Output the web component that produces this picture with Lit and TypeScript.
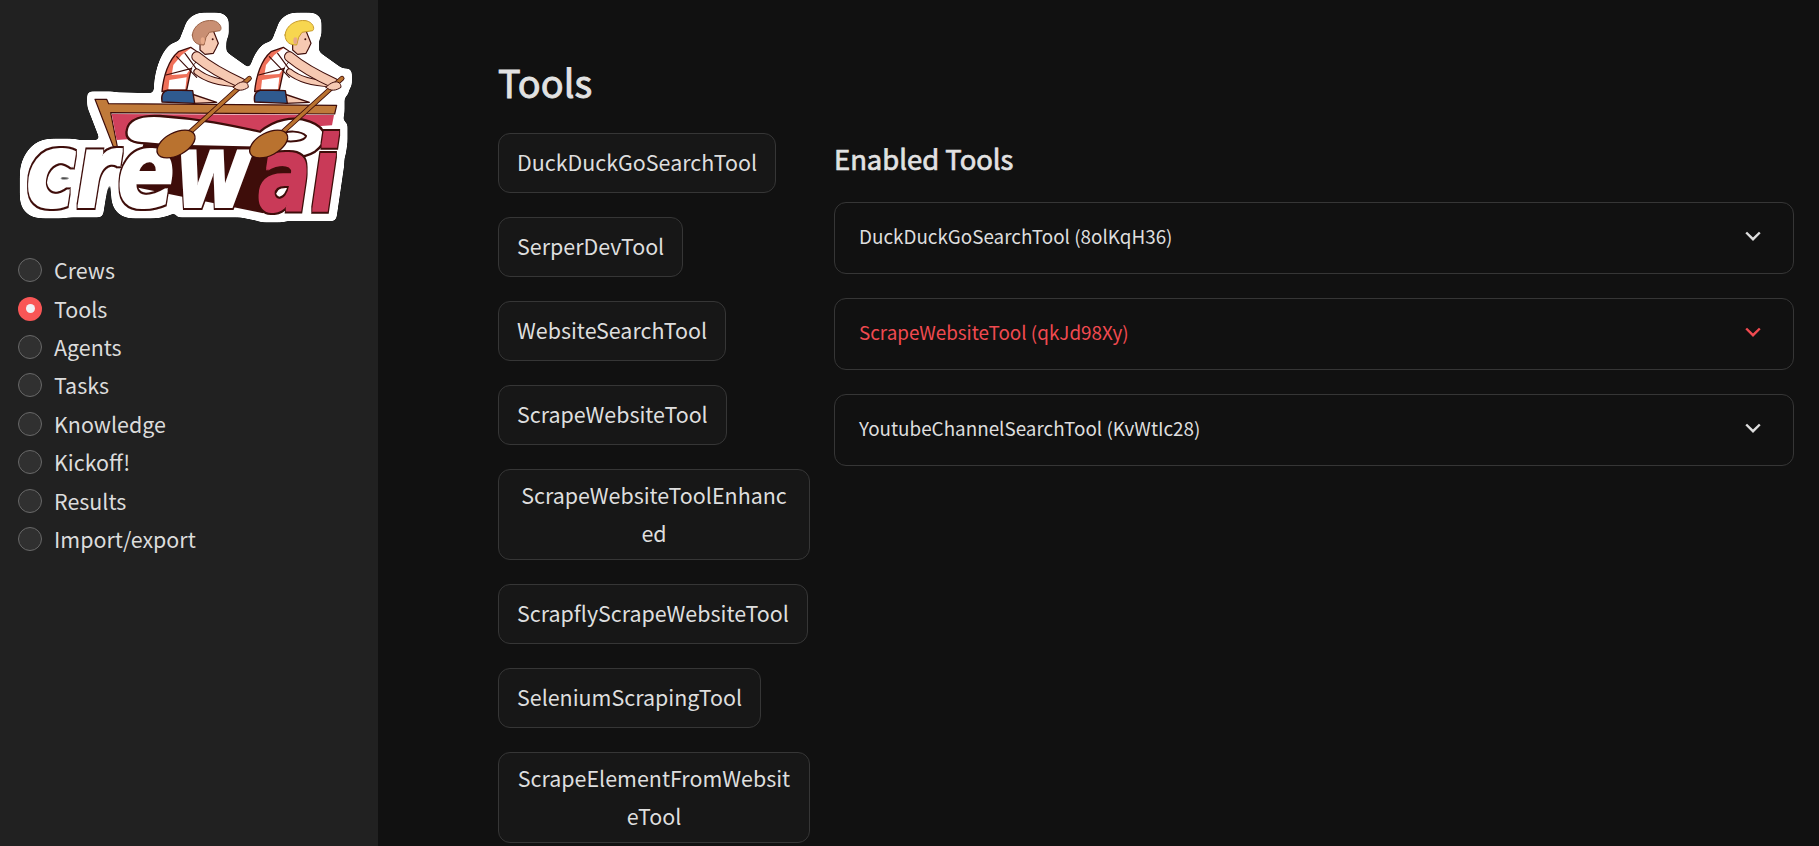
import { LitElement, html, css, svg } from "lit";
import { customElement } from "lit/decorators.js";

const NAV = ["Crews", "Tools", "Agents", "Tasks", "Knowledge", "Kickoff!", "Results", "Import/export"];
const TOOLS = [
  "DuckDuckGoSearchTool", "SerperDevTool", "WebsiteSearchTool", "ScrapeWebsiteTool",
  "ScrapeWebsiteToolEnhanced", "ScrapflyScrapeWebsiteTool", "SeleniumScrapingTool", "ScrapeElementFromWebsiteTool",
];
const ENABLED = [
  { label: "DuckDuckGoSearchTool (8olKqH36)", active: false },
  { label: "ScrapeWebsiteTool (qkJd98Xy)", active: true },
  { label: "YoutubeChannelSearchTool (KvWtIc28)", active: false },
];

const DARK = "#3e0d0a";

function rower(dx: number, hair: string, hairShade: string) {
  return svg`<g transform="translate(${dx} 0)" stroke-linejoin="round" stroke-linecap="round">
    <path d="M575 282 L650 307 L580 310 Z" fill="#f6c9b2" stroke="${DARK}" stroke-width="4"/>
    <path d="M486 306 C482 285 490 272 505 270 L578 272 L584 310 Z" fill="#2f5a8f" stroke="${DARK}" stroke-width="4"/>
    <path d="M486 275 C490 230 505 180 535 155 L572 142 L605 165 L575 200 L560 270 L505 270 Z" fill="#ef7059" stroke="${DARK}" stroke-width="4"/>
    <path d="M505 268 L508 240 L560 232 L556 268 Z" fill="#fff"/>
    <path d="M520 195 L545 165 L572 145 L602 163 L580 195 L560 222 L515 225 Z" fill="#fff"/>
    <path d="M530 170 L590 232 M498 225 L575 205 M555 160 L595 215" stroke="${DARK}" stroke-width="3.5" fill="none"/>
    <path d="M590 215 C620 240 670 250 715 252" stroke="${DARK}" stroke-width="20" fill="none"/>
    <path d="M590 215 C620 240 670 250 715 252" stroke="#f6c9b2" stroke-width="14" fill="none"/>
    <path d="M590 170 C620 195 670 225 725 250" stroke="${DARK}" stroke-width="32" fill="none"/>
    <path d="M590 170 C620 195 670 225 725 250" stroke="#f6c9b2" stroke-width="26" fill="none"/>
    <path d="M600 118 L610 92 L640 92 L655 130 L648 145 L640 160 L615 163 L600 150 Z" fill="#f6c9b2" stroke="${DARK}" stroke-width="3.5"/>
    <path d="M577 105 C580 75 610 58 640 62 C660 66 668 85 660 92 L628 97 L618 112 L612 135 C595 135 578 130 577 105 Z" fill="${hair}" stroke="${hairShade}" stroke-width="3"/>
    <circle cx="638" cy="118" r="3" fill="${DARK}"/>
    <ellipse cx="608" cy="122" rx="6" ry="10" fill="#e7a988"/>
  </g>`;
}

function oar(dx: number) {
  return svg`<g transform="translate(${dx} 0)" stroke-linecap="round">
    <path d="M748 235 L555 410" stroke="${DARK}" stroke-width="15" fill="none"/>
    <path d="M748 235 L555 410" stroke="#b9722f" stroke-width="10" fill="none"/>
    <ellipse cx="528" cy="432" rx="62" ry="34" transform="rotate(-28 528 432)" fill="#b9722f" stroke="${DARK}" stroke-width="4"/>
    <path d="M700 262 C720 240 745 240 745 262 C730 272 715 275 700 262 Z" fill="#f6c9b2" stroke="${DARK}" stroke-width="3"/>
  </g>`;
}

const LOGO = svg`
  <svg class="logo" viewBox="0 0 1140 720" width="380" height="240" role="img" aria-label="crewAI logo">
    <defs>
      <filter id="sticker" x="0" y="0" width="1140" height="720" filterUnits="userSpaceOnUse" color-interpolation-filters="sRGB">
        <feMorphology in="SourceAlpha" operator="dilate" radius="22" result="d"/>
        <feGaussianBlur in="d" stdDeviation="8" result="b"/>
        <feComponentTransfer in="b" result="s"><feFuncA type="linear" slope="10" intercept="-4"/></feComponentTransfer>
        <feFlood flood-color="#ffffff" result="w"/>
        <feComposite in="w" in2="s" operator="in" result="halo"/>
        <feMerge><feMergeNode in="halo"/><feMergeNode in="SourceGraphic"/></feMerge>
      </filter>
      <filter id="fat" x="-20%" y="-20%" width="140%" height="140%" color-interpolation-filters="sRGB">
        <feMorphology in="SourceGraphic" operator="dilate" radius="3" result="fatFill"/>
        <feMorphology in="SourceAlpha" operator="dilate" radius="9" result="o"/>
        <feFlood flood-color="${DARK}" result="dk"/>
        <feComposite in="dk" in2="o" operator="in" result="outline"/>
        <feMerge><feMergeNode in="outline"/><feMergeNode in="fatFill"/></feMerge>
      </filter>
    </defs>
    <g filter="url(#sticker)">
      <g fill="#fff">
        <path d="M285 298 L1010 316 L1000 380 L960 400 L350 440 Z"/>
        <path d="M380 385 C385 350 430 340 480 348 L780 395 C820 360 880 345 930 365 C985 385 990 430 945 460 L500 470 Z"/>
        <path d="M488 300 C485 220 510 170 560 145 C570 110 590 65 625 62 C660 65 665 90 650 135 L640 165 L745 240 L720 300 Z"/>
        <path d="M766 300 C763 220 788 170 838 145 C848 110 868 65 903 62 C938 65 943 90 928 135 L918 165 L1023 240 L998 300 Z"/>
      </g>
      ${rower(0, "#c98f73", "#9b6347")}
      ${rower(278, "#f7d64f", "#c79a2a")}
      <path d="M285 298 L320 298 L326 311 L1010 316 L1004 342 L332 338 L352 440 L340 440 Z" fill="#c07a3a" stroke="${DARK}" stroke-width="3.5" stroke-linejoin="round"/>
      <path d="M335 342 L1002 345 L996 376 L350 420 Z" fill="#d0405c"/>
      <path d="M380 392 C385 355 430 345 480 348 C600 356 690 375 780 395 C820 360 880 345 930 365 C985 385 985 425 945 455 C905 480 850 470 820 465 L440 430 C400 430 375 420 380 392 Z" fill="#fff" stroke="${DARK}" stroke-width="7"/>
      <path d="M430 432 L800 440 L900 470 L790 640 L400 560 Z" fill="${DARK}"/>
      <path d="M840 405 C860 390 905 392 918 408 C915 424 870 428 840 420 Z" fill="#fff" stroke="${DARK}" stroke-width="6"/>
      <g font-family="'DejaVu Sans', sans-serif" font-weight="700" font-style="italic" font-size="310">
        <text transform="translate(78 622) scale(0.815 1)" fill="#fff" filter="url(#fat)">crew</text>
        <text transform="translate(775 632) scale(0.75 1)" fill="#c93a58" filter="url(#fat)">ai</text>
      </g>
      ${oar(0)}
      ${oar(278)}
    </g>
  </svg>`;

@customElement("app-root")
export class AppRoot extends LitElement {
  static styles = css`
    :host {
      display: block;
      height: 100vh;
      overflow: hidden;
      background: #111111;
      color: #e0e0e0;
      font-family: "Noto Sans CJK SC", "Noto Sans", sans-serif;
    }
    .layout { display: flex; height: 100%; }
    .sidebar { width: 378px; flex: none; background: #212121; }
    .logo { display: block; }
    .nav { display: flex; flex-direction: column; padding: 11px 0 0 18px; }
    .nav-item { display: flex; align-items: center; gap: 12px; height: 38.4px; font-size: 21.45px; color: #dcdcdc; }
    .nav-item span:last-child { padding-bottom: 1px; }
    .radio { width: 24px; height: 24px; flex: none; box-sizing: border-box; border-radius: 50%; background: #303030; border: 1.5px solid #686868; }
    .radio.on { background: #f95656; border: none; display: flex; align-items: center; justify-content: center; }
    .radio.on::after { content: ""; width: 9px; height: 9px; border-radius: 50%; background: #f0f2f6; }
    .main { flex: 1; min-width: 0; padding: 53px 25px 0 120px; }
    h1 { margin: 0 0 22px; font-size: 37.8px; line-height: 58px; font-weight: 400; -webkit-text-stroke: 0.9px #e2e2e2; color: #e2e2e2; }
    .cols { display: flex; gap: 24px; align-items: flex-start; }
    .left { width: 312px; flex: none; display: flex; flex-direction: column; align-items: flex-start; gap: 24px; }
    .btn {
      box-sizing: border-box; max-width: 100%; min-height: 60px; padding: 5.5px 18px 7.5px;
      display: flex; align-items: center; justify-content: center; text-align: center;
      font-size: 21.45px; line-height: 38px; color: #dedede;
      background: #171717; border: 1px solid #363636; border-radius: 12px; overflow-wrap: anywhere;
    }
    .right { flex: 1; min-width: 0; display: flex; flex-direction: column; }
    h2 { margin: 0 0 23px; padding-top: 4px; font-size: 27.4px; line-height: 42px; font-weight: 400; -webkit-text-stroke: 0.7px #e2e2e2; color: #e2e2e2; }
    .exp {
      box-sizing: border-box; height: 71.5px; margin-bottom: 24.5px; padding: 0 32px 4px 24px;
      display: flex; align-items: center; justify-content: space-between;
      border: 1px solid #363636; border-radius: 12px; font-size: 18.85px; color: #dedede;
    }
    .exp.active { color: #f04a50; }
    .chev { width: 16px; height: 10px; fill: none; stroke: currentColor; stroke-width: 2.4; }
  `;

  render() {
    return html`<div class="layout">
      <aside class="sidebar">
        ${LOGO}
        <nav class="nav">
          ${NAV.map((n) => html`<div class="nav-item"><span class="radio ${n === "Tools" ? "on" : ""}"></span><span>${n}</span></div>`)}
        </nav>
      </aside>
      <main class="main">
        <h1>Tools</h1>
        <div class="cols">
          <div class="left">${TOOLS.map((t) => html`<div class="btn">${t}</div>`)}</div>
          <div class="right">
            <h2>Enabled Tools</h2>
            ${ENABLED.map((e) => html`<div class="exp ${e.active ? "active" : ""}"><span>${e.label}</span>
              <svg class="chev" viewBox="0 0 16 10"><path d="M1.2 1.5 L8 8.2 L14.8 1.5"/></svg></div>`)}
          </div>
        </div>
      </main>
    </div>`;
  }
}
